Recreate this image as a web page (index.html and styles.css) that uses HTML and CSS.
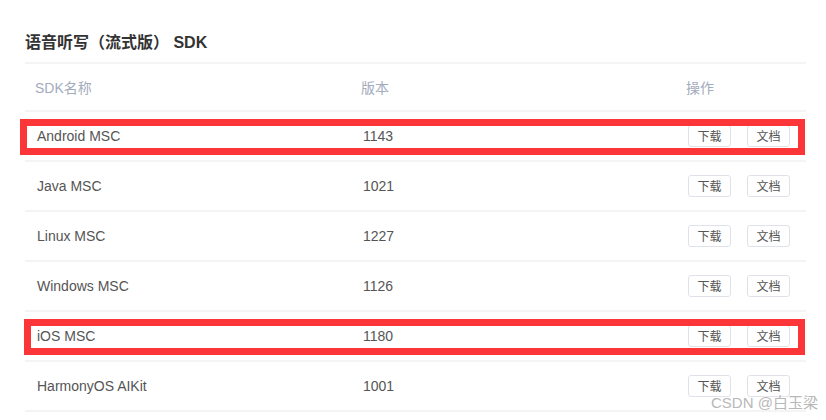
FILE: index.html
```html
<!DOCTYPE html>
<html lang="zh-CN">

<head>
    <meta charset="UTF-8">
    <title>语音听写（流式版） SDK</title>
    <link rel="stylesheet" href="styles.css">
</head>

<body>
    <div class="panel">
        <h2 class="title">语音听写（流式版） SDK</h2>
        <div class="sdk-table">
            <div class="row head">
                <div class="col-name">SDK名称</div>
                <div class="col-ver">版本</div>
                <div class="col-op">操作</div>
            </div>
            <div class="row marked">
                <div class="col-name">Android MSC</div>
                <div class="col-ver">1143</div>
                <div class="col-op"><button class="btn">下载</button><button class="btn">文档</button></div>
                <div class="mark mark-a"></div>
            </div>
            <div class="row">
                <div class="col-name">Java MSC</div>
                <div class="col-ver">1021</div>
                <div class="col-op"><button class="btn">下载</button><button class="btn">文档</button></div>
            </div>
            <div class="row">
                <div class="col-name">Linux MSC</div>
                <div class="col-ver">1227</div>
                <div class="col-op"><button class="btn">下载</button><button class="btn">文档</button></div>
            </div>
            <div class="row">
                <div class="col-name">Windows MSC</div>
                <div class="col-ver">1126</div>
                <div class="col-op"><button class="btn">下载</button><button class="btn">文档</button></div>
            </div>
            <div class="row marked">
                <div class="col-name">iOS MSC</div>
                <div class="col-ver">1180</div>
                <div class="col-op"><button class="btn">下载</button><button class="btn">文档</button></div>
                <div class="mark mark-b"></div>
            </div>
            <div class="row">
                <div class="col-name">HarmonyOS AIKit</div>
                <div class="col-ver">1001</div>
                <div class="col-op"><button class="btn">下载</button><button class="btn">文档</button></div>
            </div>
        </div>
    </div>
    <div class="watermark">CSDN @白玉梁</div>
</body>

</html>
```

FILE: styles.css
```css
/* SDK download list */
body {
    margin: 0;
    background: #fff;
    font-family: "Liberation Sans", Arial, "Noto Sans CJK SC", sans-serif;
    color: #555;
    overflow: hidden;
}

.panel {
    width: 781px;
    padding: 33px 0 0 25px;
}

.title {
    margin: 0 0 10px;
    height: 19px;
    line-height: 19px;
    font-size: 16px;
    font-weight: bold;
    color: #333;
}

.sdk-table {
    border-top: 2px solid #f4f4f7;
}

.row {
    position: relative;
    display: flex;
    align-items: center;
    height: 48px;
    border-bottom: 2px solid #f4f4f7;
    font-size: 14px;
}

.row.head {
    height: 46px;
    color: #a3abbd;
}

.col-name {
    width: 326px;
    padding-left: 12px;
}

.row.head .col-name {
    padding-left: 10px;
}

.col-ver {
    width: 325px;
}

.col-op {
    display: flex;
    gap: 16px;
}

.btn {
    width: 43px;
    height: 22px;
    padding: 0;
    border: 1px solid #dfe2e8;
    border-radius: 3px;
    background: #fff;
    color: #555;
    font-family: "Noto Sans CJK SC", sans-serif;
    font-size: 12px;
    line-height: 20px;
}

/* red annotation boxes */
.mark {
    position: absolute;
    top: 7px;
    height: 22px;
    border: 7px solid #fb3538;
    pointer-events: none;
}

.mark-a {
    left: -5px;
    width: 771px;
}

.mark-b {
    left: -1px;
    width: 767px;
}

.watermark {
    position: absolute;
    left: 711px;
    top: 391px;
    font-size: 15px;
    font-weight: normal;
    color: #b8b8b8;
    text-shadow: 0 0 2px #fff, 0 0 2px #fff;
}
```
